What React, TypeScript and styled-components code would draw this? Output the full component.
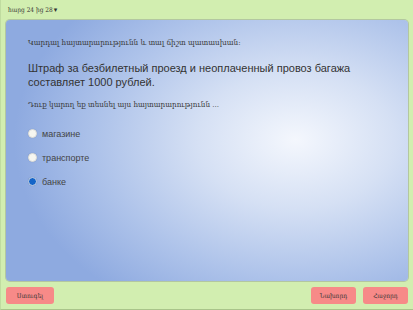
import styled, { createGlobalStyle } from "styled-components";

const Global = createGlobalStyle`
  html, body {
    margin: 0;
    padding: 0;
    width: 413px;
    height: 310px;
    overflow: hidden;
    background: #d2eeb0;
  }
`;

const options = ["магазине", "транспорте", "банке"];
const selected = 2;

export default function App() {
  return (
    <>
      <Global />
      <Frame>
        <TopBar>
          <Counter>
            հարց 24 ից 28 <Caret>▾</Caret>
          </Counter>
        </TopBar>
        <Panel>
          <Hint>Կարդալ հայտարարությունն և տալ ճիշտ պատասխան:</Hint>
          <Question>
            Штраф за безбилетный проезд и неоплаченный провоз багажа
            составляет 1000 рублей.
          </Question>
          <Hint>Դուք կարող եք տեսնել այս հայտարարությունն ...</Hint>
          <Options>
            {options.map((o, i) => (
              <Option key={o}>
                <Radio $checked={i === selected} />
                <Label>{o}</Label>
              </Option>
            ))}
          </Options>
        </Panel>
        <Footer>
          <Button $wide>Ստուգել</Button>
          <Spacer />
          <Button>Նախորդ</Button>
          <Button>Հաջորդ</Button>
        </Footer>
      </Frame>
    </>
  );
}

const armenian = `"DejaVu Serif Condensed", "DejaVu Serif", serif`;

const Frame = styled.div`
  width: 413px;
  height: 310px;
  box-sizing: border-box;
  display: flex;
  flex-direction: column;
  padding: 0 5px 5px;
  border-bottom: 1px solid #a9c48a;
  border-left: 1px solid #c0dca0;
`;

const TopBar = styled.div`
  height: 20px;
  display: flex;
  align-items: center;
  padding-left: 2px;
`;

const Counter = styled.div`
  font-family: ${armenian};
  font-size: 6.5px;
  color: #333;
  display: flex;
  align-items: center;
  gap: 1px;
`;

const Caret = styled.span`
  font-family: "DejaVu Sans", sans-serif;
  font-size: 7px;
`;

const Panel = styled.div`
  flex: 1;
  border-radius: 4px;
  background: radial-gradient(
    ellipse 70% 75% at 72% 46%,
    #f4f7fd 0%,
    #d5e0f4 35%,
    #aec3ea 70%,
    #8eaae0 100%
  );
  box-shadow: 0 0 0 1px #b3c7a0;
  padding: 18px 20px 0 22px;
  display: flex;
  flex-direction: column;
`;

const Hint = styled.div`
  font-family: ${armenian};
  font-size: 8px;
  line-height: 10px;
  color: #3a3a3a;
`;

const Question = styled.div`
  font-family: "Liberation Sans", Arial, sans-serif;
  font-size: 11px;
  line-height: 14px;
  color: #333;
  margin: 13px 0 11px;
  max-width: 340px;
`;

const Options = styled.div`
  display: flex;
  flex-direction: column;
  gap: 13px;
  margin-top: 18px;
`;

const Option = styled.div`
  display: flex;
  align-items: center;
  gap: 5px;
  height: 11px;
`;

const Radio = styled.span<{ $checked: boolean }>`
  width: 9px;
  height: 9px;
  border-radius: 50%;
  box-sizing: border-box;
  background: ${(p) => (p.$checked ? "#1565c8" : "#f6f6f0")};
  border: 1px solid ${(p) => (p.$checked ? "#c8d4e8" : "#e0e0dc")};
  box-shadow: 0 0 1px rgba(0, 0, 0, 0.2);
`;

const Label = styled.span`
  font-family: "Liberation Sans", Arial, sans-serif;
  font-size: 9px;
  color: #444;
`;

const Footer = styled.div`
  height: 23px;
  display: flex;
  align-items: flex-end;
  gap: 7px;
`;

const Spacer = styled.div`
  flex: 1;
`;

const Button = styled.button<{ $wide?: boolean }>`
  height: 17px;
  padding: 0 6px;
  border: none;
  border-radius: 3px;
  background: #f78a88;
  font-family: ${armenian};
  font-size: 6.5px;
  color: #333;
  min-width: ${(p) => (p.$wide ? "48px" : "45px")};
`;
